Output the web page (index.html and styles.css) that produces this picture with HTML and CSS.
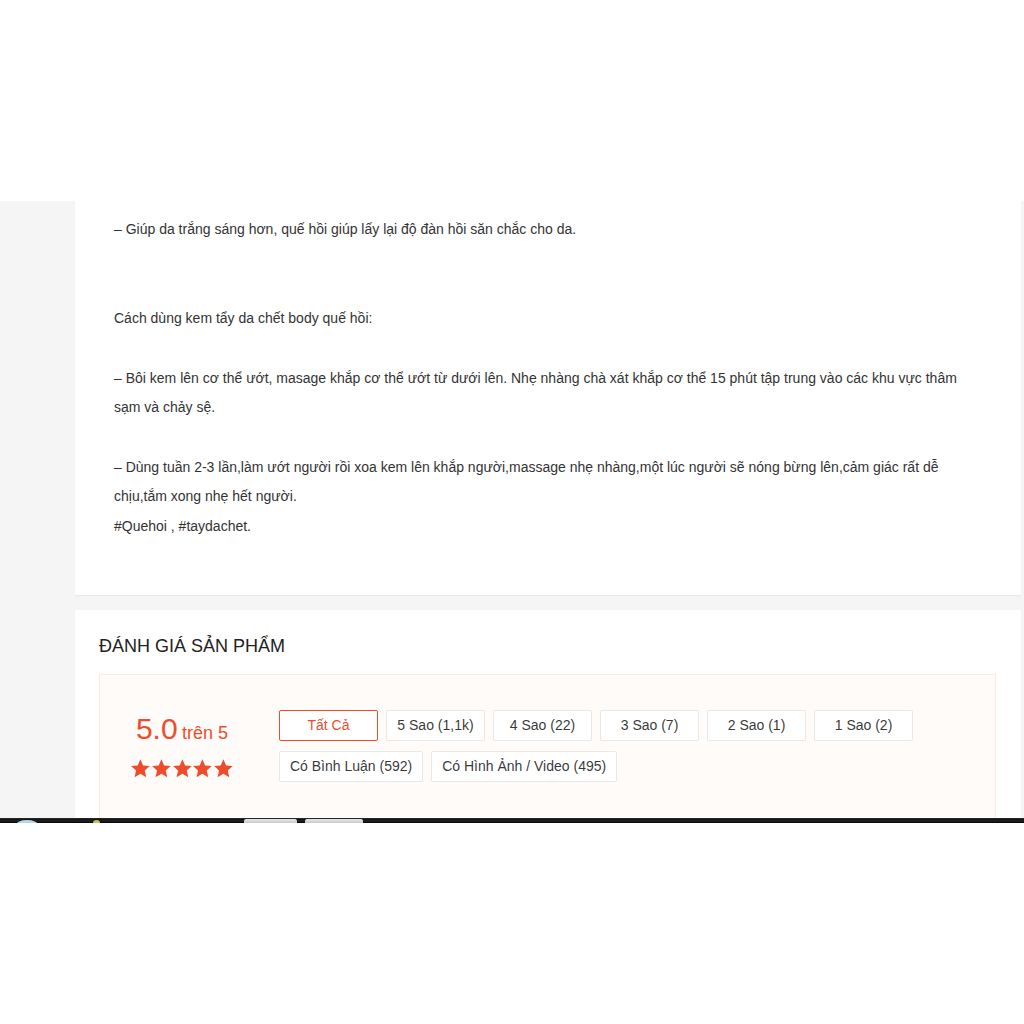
FILE: index.html
```html
<!DOCTYPE html>
<html lang="vi">
<head>
    <meta charset="UTF-8">
    <meta name="viewport" content="width=device-width, initial-scale=1.0">
    <title>Đánh giá sản phẩm</title>
    <link rel="stylesheet" href="styles.css">
</head>
<body>
    <div class="top-space"></div>
    <div class="viewport">
        <div class="page">
            <div class="card desc">
                <div class="desc-text">– Giúp da trắng sáng hơn, quế hồi giúp lấy lại độ đàn hồi săn chắc cho da.


Cách dùng kem tẩy da chết body quế hồi:

– Bôi kem lên cơ thể ướt, masage khắp cơ thể ướt từ dưới lên. Nhẹ nhàng chà xát khắp cơ thể 15 phút tập trung vào các khu vực thâm sạm và chảy sệ.

– Dùng tuần 2-3 lần,làm ướt người rồi xoa kem lên khắp người,massage nhẹ nhàng,một lúc người sẽ nóng bừng lên,cảm giác rất dễ chịu,tắm xong nhẹ hết người.
#Quehoi , #taydachet.</div>
            </div>

            <div class="card rating">
                <div class="rating-title">Đánh giá sản phẩm</div>
                <div class="overview">
                    <div class="briefing">
                        <div class="score">
                            <span class="score-big">5.0</span>
                            <span class="score-out"> trên 5</span>
                        </div>
                        <div class="stars">
                            <svg viewBox="0 0 20 20"><path d="M10 1.2l2.6 5.9 6.4.6-4.8 4.3 1.4 6.3L10 15l-5.6 3.3 1.4-6.3L1 7.7l6.4-.6z"/></svg>
                            <svg viewBox="0 0 20 20"><path d="M10 1.2l2.6 5.9 6.4.6-4.8 4.3 1.4 6.3L10 15l-5.6 3.3 1.4-6.3L1 7.7l6.4-.6z"/></svg>
                            <svg viewBox="0 0 20 20"><path d="M10 1.2l2.6 5.9 6.4.6-4.8 4.3 1.4 6.3L10 15l-5.6 3.3 1.4-6.3L1 7.7l6.4-.6z"/></svg>
                            <svg viewBox="0 0 20 20"><path d="M10 1.2l2.6 5.9 6.4.6-4.8 4.3 1.4 6.3L10 15l-5.6 3.3 1.4-6.3L1 7.7l6.4-.6z"/></svg>
                            <svg viewBox="0 0 20 20"><path d="M10 1.2l2.6 5.9 6.4.6-4.8 4.3 1.4 6.3L10 15l-5.6 3.3 1.4-6.3L1 7.7l6.4-.6z"/></svg>
                        </div>
                    </div>
                    <div class="filters">
                        <div class="filter active">Tất Cả</div>
                        <div class="filter">5 Sao (1,1k)</div>
                        <div class="filter">4 Sao (22)</div>
                        <div class="filter">3 Sao (7)</div>
                        <div class="filter">2 Sao (1)</div>
                        <div class="filter">1 Sao (2)</div>
                        <div class="filter wide">Có Bình Luận (592)</div>
                        <div class="filter wide">Có Hình Ảnh / Video (495)</div>
                    </div>
                </div>
            </div>
        </div>
    </div>
    <div class="taskbar">
        <span class="orb"></span>
        <span class="tray-dot"></span>
        <span class="task-btn first"></span>
        <span class="task-btn second"></span>
    </div>
</body>
</html>
```

FILE: styles.css
```css
body {
    margin: 0;
    background: #fff;
    font-family: Arial, "Liberation Sans", sans-serif;
    color: rgba(0, 0, 0, 0.8);
}
.top-space {
    height: 201px;
}
.viewport {
    height: 617px;
    overflow: hidden;
    background: #f5f5f5;
    padding: 0 3px 0 75px;
}
.card {
    background: #fff;
    box-shadow: 0 1px 1px rgba(0, 0, 0, 0.05);
}
.desc {
    padding: 14px 39px 53px 39px;
}
.desc-text {
    white-space: pre-line;
    font-size: 14px;
    line-height: 29.7px;
    color: #333;
}
.rating {
    margin-top: 15px;
    padding: 26px 25px 30px 24px;
}
.rating-title {
    font-size: 18px;
    line-height: 21px;
    text-transform: uppercase;
    color: #222;
    margin-bottom: 17px;
}
.overview {
    display: flex;
    align-items: flex-start;
    background: #fffbf8;
    border: 1px solid #f9ede5;
    padding: 30px 30px 60px 30px;
}
.briefing {
    width: 104px;
    text-align: center;
    margin-right: 45px;
    color: #ee4d2d;
}
.score {
    margin-top: 7px;
    white-space: nowrap;
}
.score-big {
    font-size: 30px;
}
.score-out {
    font-size: 18px;
}
.stars {
    display: flex;
    justify-content: center;
    margin-top: 12px;
}
.stars svg {
    width: 21px;
    height: 21px;
    fill: #ee4d2d;
}
.filters {
    flex: 1;
    display: flex;
    flex-wrap: wrap;
}
.filter {
    box-sizing: border-box;
    min-width: 99px;
    height: 31px;
    line-height: 29px;
    padding: 0 10px;
    margin: 5px 8px 5px 0;
    background: #fff;
    border: 1px solid rgba(0, 0, 0, 0.09);
    border-radius: 2px;
    text-align: center;
    font-size: 14px;
    color: rgba(0, 0, 0, 0.8);
}
.filter.active {
    color: #ee4d2d;
    border-color: #ee4d2d;
}
.taskbar {
    position: relative;
    height: 5px;
    background: linear-gradient(#3a3a3a 0, #111 1px, #222 3px, #000 5px);
    overflow: hidden;
}
.orb {
    position: absolute;
    left: 16px;
    top: 2px;
    width: 22px;
    height: 10px;
    border-radius: 50%;
    background: #b9d6ec;
}
.tray-dot {
    position: absolute;
    left: 93px;
    top: 2px;
    width: 7px;
    height: 6px;
    border-radius: 50%;
    background: #c9c05a;
}
.task-btn {
    position: absolute;
    top: 1px;
    height: 6px;
    border-radius: 2px 2px 0 0;
    background: linear-gradient(#e8e8e8, #bbb);
}
.task-btn.first {
    left: 244px;
    width: 53px;
}
.task-btn.second {
    left: 305px;
    width: 58px;
}
```
